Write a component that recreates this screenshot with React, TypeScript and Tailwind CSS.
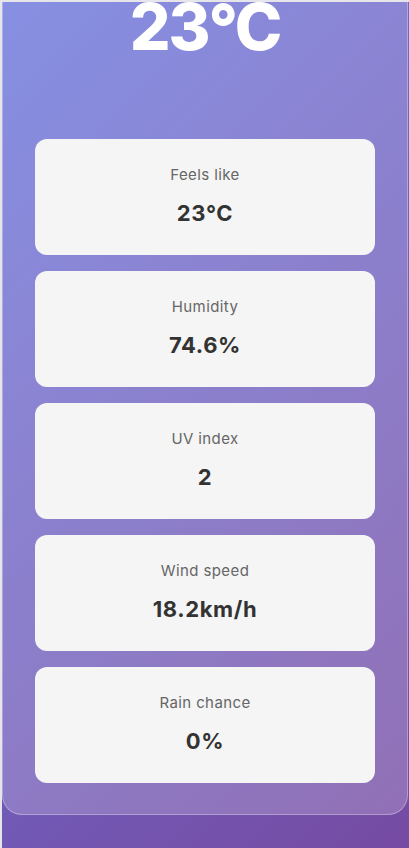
import React from "react";

const items = [
  { label: "Feels like", value: "23°C" },
  { label: "Humidity", value: "74.6%" },
  { label: "UV index", value: "2" },
  { label: "Wind speed", value: "18.2km/h" },
  { label: "Rain chance", value: "0%" },
];

export default function App() {
  return (
    <div className="bg-[#e6e6ea] pt-[2px] pl-[2px] w-[409px] h-[848px] overflow-hidden" style={{ fontFamily: "Inter, 'Liberation Sans', sans-serif" }}>
      <div className="w-[407px] h-[846px] overflow-hidden bg-[linear-gradient(135deg,#6974dc_0%,#764ba2_100%)]">
        <div className="-mt-[40px] w-[406px] rounded-[20px] border border-white/30 bg-white/20 pt-[32px] pb-[31px] px-[32px] flex flex-col">
          <h1 className="text-center text-white font-extrabold text-[64px] leading-[64px] tracking-[-2px]">23°C</h1>
          <div className="mt-[80px] flex flex-col gap-[16px]">
            {items.map((it) => (
              <div key={it.label} className="h-[116px] rounded-[12px] bg-[#f5f5f5] flex flex-col items-center pt-[25px]">
                <div className="text-[15px] leading-[22px] tracking-[0.4px] text-[#666666]">{it.label}</div>
                <div className="mt-[13px] text-[22px] leading-[28px] tracking-[0.6px] font-bold text-[#333333]">{it.value}</div>
              </div>
            ))}
          </div>
        </div>
      </div>
    </div>
  );
}
